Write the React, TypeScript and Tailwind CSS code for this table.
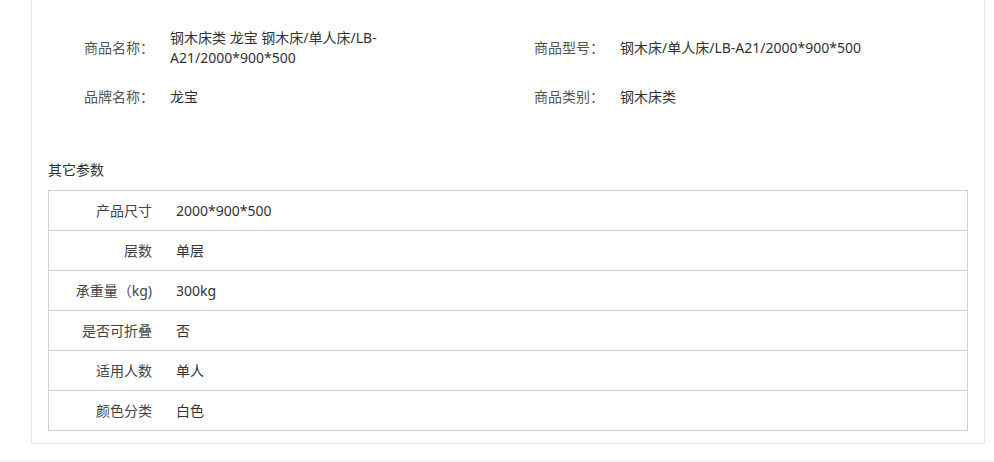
import React from "react";

const params: [string, string][] = [
  ["产品尺寸", "2000*900*500"],
  ["层数", "单层"],
  ["承重量（kg)", "300kg"],
  ["是否可折叠", "否"],
  ["适用人数", "单人"],
  ["颜色分类", "白色"],
];

function Attr({ label, value, first }: { label: string; value: string; first?: boolean }) {
  return (
    <div className={`flex items-center ${first ? "w-[450px]" : "w-[400px]"}`}>
      <div className="w-[86px] shrink-0 text-[#555]">{label}</div>
      <div className="w-[250px] text-[#333]">{value}</div>
    </div>
  );
}

export default function App() {
  return (
    <div
      className="w-[994px] h-[462px] bg-white text-[14px] leading-[20px] overflow-hidden"
      style={{ fontFamily: '"Noto Sans", "Noto Sans CJK SC", sans-serif' }}
    >
      <div className="h-[460px] bg-white pl-[31px] pr-[9px]">
        <div className="h-[444px] border-x border-b border-[#e5e5e5] px-[16px] pt-[28px]">
          <div className="pl-[36px]">
            <div className="flex">
              <Attr first label="商品名称：" value="钢木床类 龙宝 钢木床/单人床/LB-A21/2000*900*500" />
              <Attr label="商品型号：" value="钢木床/单人床/LB-A21/2000*900*500" />
            </div>
            <div className="flex mt-[19px]">
              <Attr first label="品牌名称：" value="龙宝" />
              <Attr label="商品类别：" value="钢木床类" />
            </div>
          </div>
          <div className="mt-[53px] text-[#333]">其它参数</div>
          <div className="mt-[10px] border border-[#d0d0d0]">
            {params.map(([k, v], i) => (
              <div
                key={k}
                className={i > 0 ? "flex h-[40px] items-center border-t border-[#d0d0d0]" : "flex h-[39px] items-center"}
              >
                <div className="w-[115px] pr-[12px] text-right text-[#444]">{k}</div>
                <div className="pl-[12px] text-[#333]">{v}</div>
              </div>
            ))}
          </div>
        </div>
      </div>
      <div className="h-[2px] bg-[#f5f5f5]" />
    </div>
  );
}
